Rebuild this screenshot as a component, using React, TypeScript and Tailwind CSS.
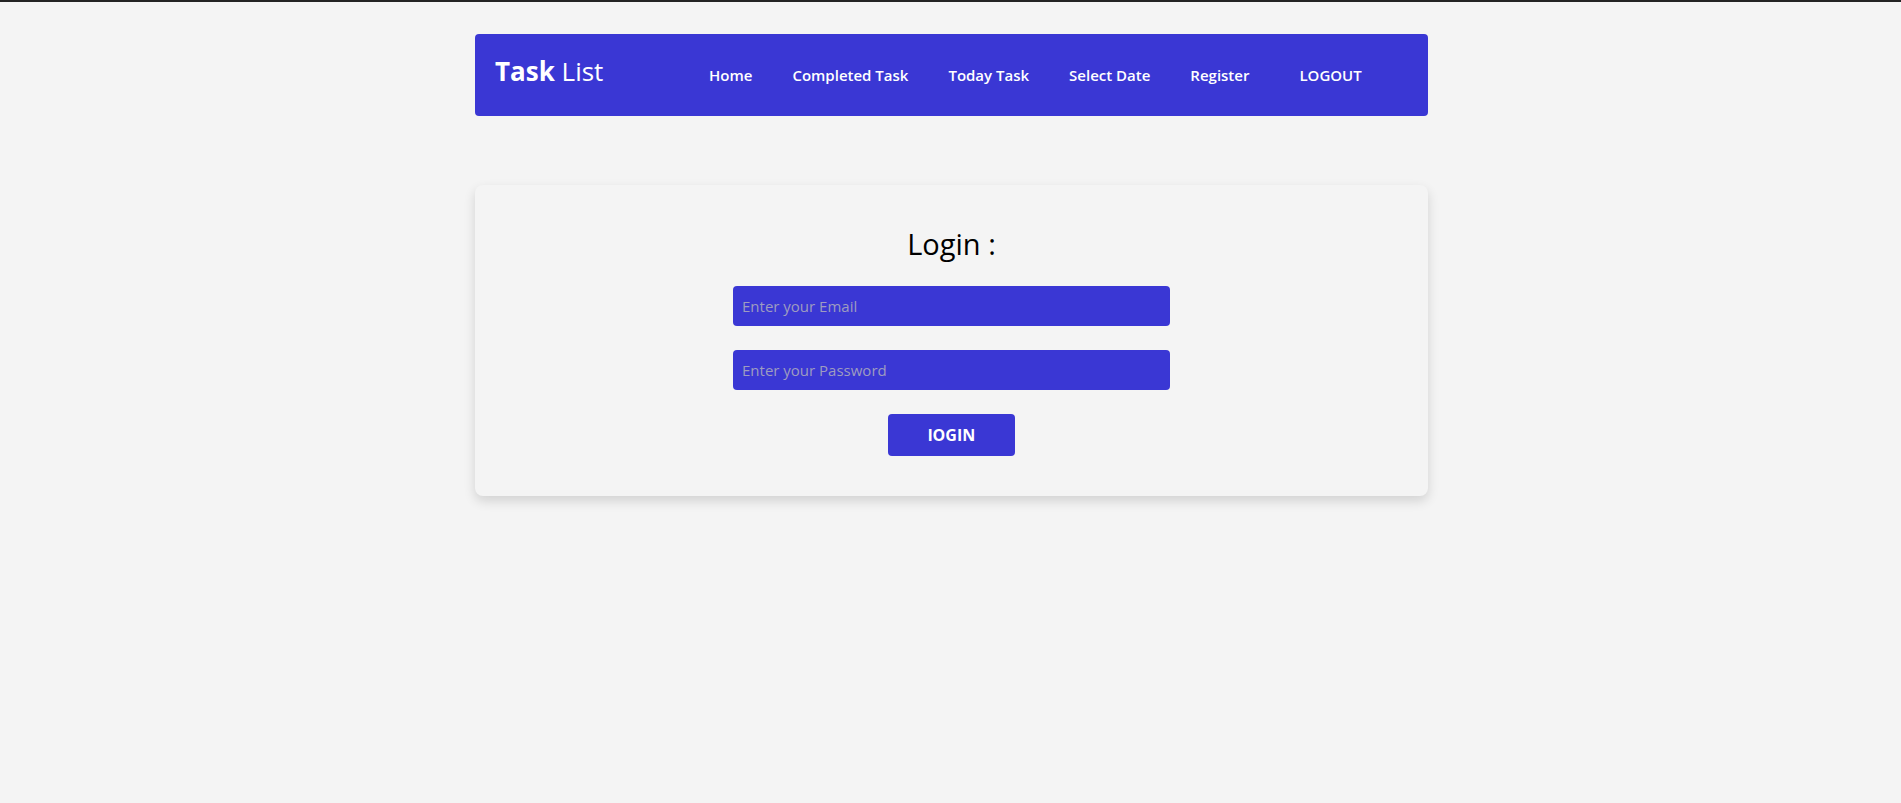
const links = ["Home", "Completed Task", "Today Task", "Select Date", "Register"];

export default function App() {
  return (
    <div
      className="min-h-screen border-t-2 border-[#232323] bg-[#f4f4f4] pt-8"
      style={{ fontFamily: '"Open Sans", "Noto Sans", sans-serif' }}
    >
      <nav className="mx-auto flex h-[82px] w-[953px] translate-x-px items-center rounded bg-[#3a37d4] pl-5 text-white">
        <div className="-mt-2 w-[194px] text-[26px] leading-none">
          <span className="font-bold">Task</span> List
        </div>
        <ul className="flex items-center text-[15px] font-semibold">
          {links.map((l) => (
            <li key={l}>
              <a href="#" className="block px-5">
                {l}
              </a>
            </li>
          ))}
          <li>
            <button className="ml-[10px] px-5 font-semibold">LOGOUT</button>
          </li>
        </ul>
      </nav>

      <div className="mx-auto mt-[69px] flex w-[953px] translate-x-px flex-col items-center rounded-lg bg-[#f4f4f4] pb-10 pt-[41px] shadow-[0_5px_12px_rgba(0,0,0,0.14)]">
        <h2 className="text-[29px] leading-9 text-black">Login :</h2>
        <input
          type="email"
          placeholder="Enter your Email"
          className="mt-6 h-10 w-[437px] rounded border-0 bg-[#3a37d4] px-[9px] text-[15px] text-white outline-none placeholder:text-[#9e9cc0]"
        />
        <input
          type="password"
          placeholder="Enter your Password"
          className="mt-6 h-10 w-[437px] rounded border-0 bg-[#3a37d4] px-[9px] text-[15px] text-white outline-none placeholder:text-[#9e9cc0]"
        />
        <button className="mt-6 h-[42px] w-[127px] rounded bg-[#3a37d4] text-[16px] font-bold text-white">
          lOGIN
        </button>
      </div>
    </div>
  );
}
